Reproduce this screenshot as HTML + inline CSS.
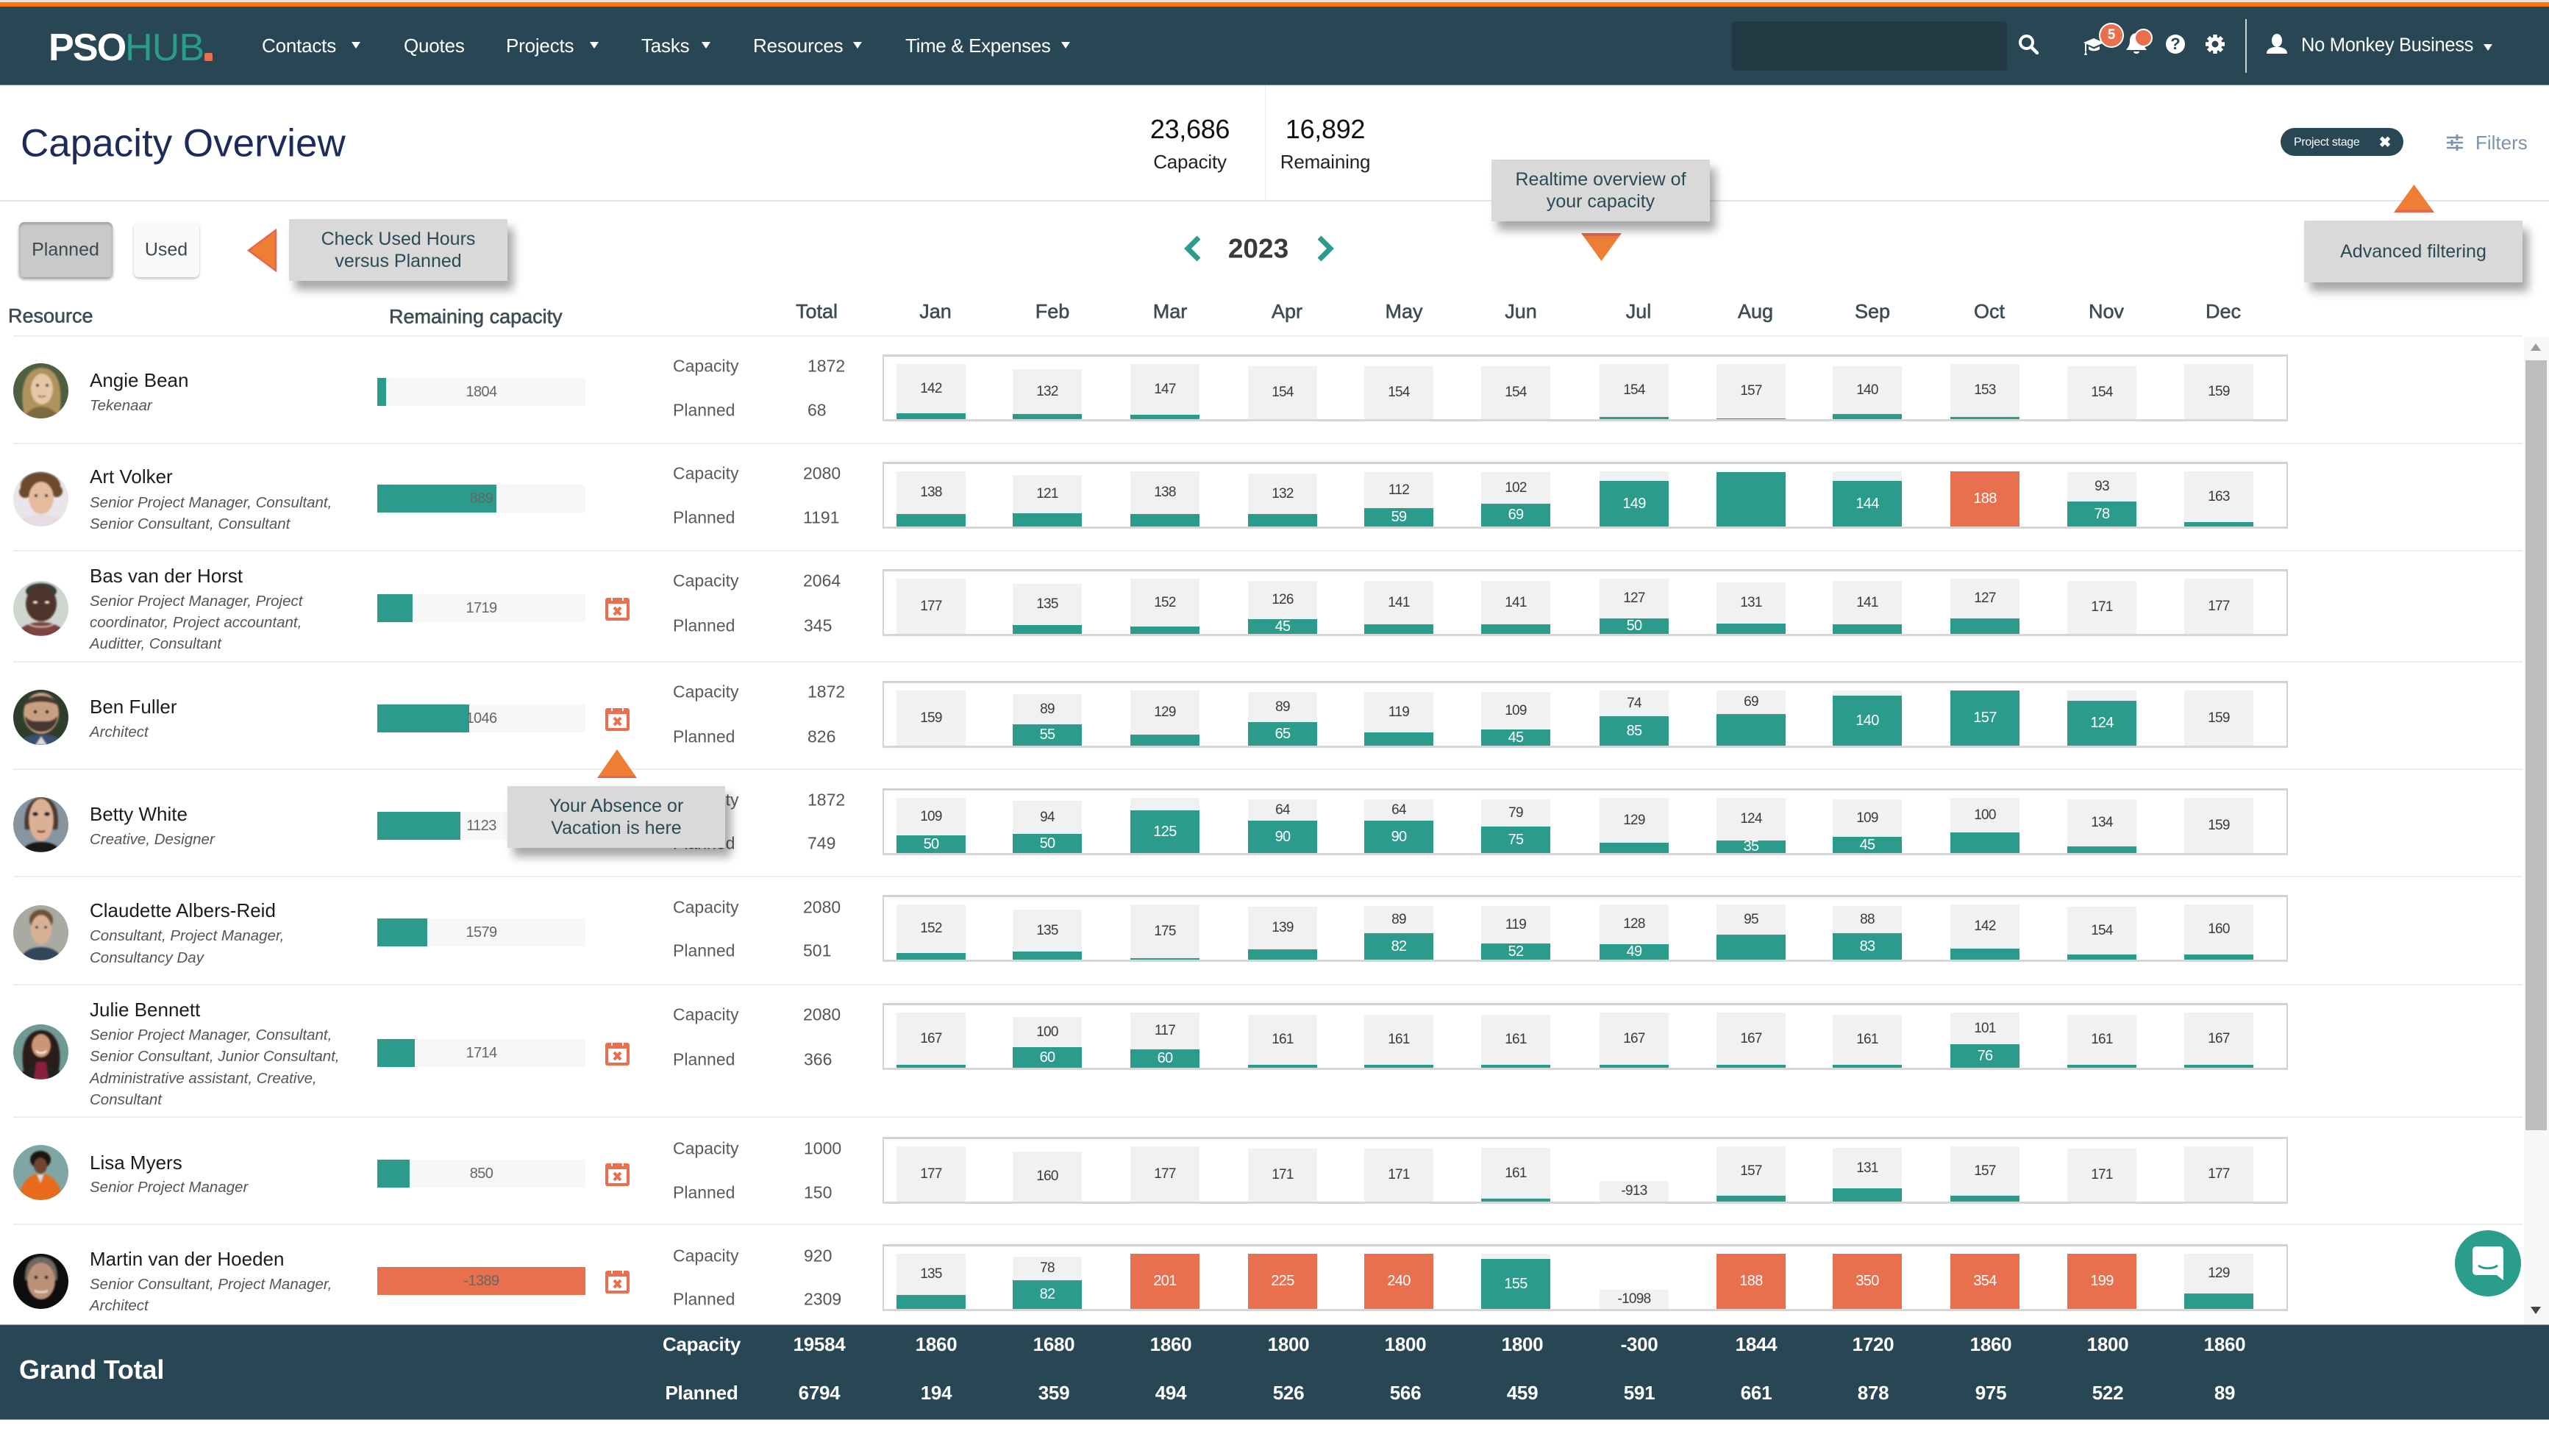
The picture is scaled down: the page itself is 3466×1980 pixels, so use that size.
<!DOCTYPE html>
<html lang="en"><head><meta charset="utf-8"><title>Capacity Overview</title>
<style>
html,body{margin:0;padding:0;background:#fff}
body{width:3466px;height:1980px;overflow:hidden;position:relative;font-family:"Liberation Sans",sans-serif;color:#3c3c3c}
.a{position:absolute}
.t,.m{position:absolute;white-space:nowrap;line-height:1;transform:translateY(-50%)}
.m{transform:translate(-50%,-50%)}
.nav{color:#fff;font-size:26px;letter-spacing:-.2px;top:62px}
.car{position:absolute;width:0;height:0;border-left:6px solid transparent;border-right:6px solid transparent;border-top:9px solid #fff;top:57px}
.tip{position:absolute;background:#d9d9d9;box-shadow:8px 12px 12px rgba(0,0,0,.35);z-index:5;color:#2a4a56;font-size:25px;text-align:center;line-height:30px;display:flex;align-items:center;justify-content:center}
.hd{font-size:27px;color:#3d4d53;-webkit-text-stroke:.6px #3d4d53}
.line{position:absolute;left:18px;width:3412px;height:2px;background:#ececec}
.n{font-size:26px;color:#1c1c1c;left:122px}
.ro{font-size:20.5px;font-style:italic;color:#555;left:122px}
.l{font-size:23px;color:#5a5a5a;left:915px}
.v{font-size:23px;color:#555}
.bar{position:absolute;left:513px;width:283px;height:38px;background:#f7f7f7;font-size:20px;color:#666;overflow:hidden}
.bar b{display:block;height:100%;background:#2b9c8b}
.bar span{position:absolute;left:0;right:0;top:0;line-height:38px;text-align:center;letter-spacing:-.6px}
.bar b.o{background:#e8704f}
.cal{position:absolute;left:823px;width:33px;height:34px}
.av{position:absolute;left:18px;width:75px;height:75px;border-radius:50%;overflow:hidden;display:block}
.av g{filter:blur(1px)}
.r{position:absolute;left:1200px;width:1911px;height:91px}
.r::before{content:"";position:absolute;inset:0;border:2px solid #d2d2d2;border-top-width:3px;border-bottom-width:3px;box-sizing:border-box;border-bottom-color:#d6d6d6}
.r p{position:absolute;bottom:3px;margin:0;width:94px;background:#f1f1f1;display:flex;flex-direction:column;font-size:19px;letter-spacing:-.7px;color:#3a3a3a}
.r p i{flex:1;font-style:normal;display:flex;align-items:center;justify-content:center;min-height:0}
.r p b{display:flex;align-items:center;justify-content:center;background:#2b9c8b;color:#fff;font-weight:normal;font-size:20px;flex:none}
.r p b.o{background:#e8704f}
.r p:nth-child(1){left:19px}.r p:nth-child(2){left:177px}.r p:nth-child(3){left:337px}.r p:nth-child(4){left:497px}
.r p:nth-child(5){left:655px}.r p:nth-child(6){left:814px}.r p:nth-child(7){left:975px}.r p:nth-child(8){left:1134px}
.r p:nth-child(9){left:1292px}.r p:nth-child(10){left:1452px}.r p:nth-child(11){left:1611px}.r p:nth-child(12){left:1770px}
.gt{color:#fff;font-weight:bold;font-size:26px;letter-spacing:-.3px}
</style></head><body>

<!-- top -->
<div class="a" style="left:0;top:0;width:3466px;height:3px;background:#e6e2dd"></div>
<div class="a" style="left:0;top:3px;width:3466px;height:6px;background:#ff7200"></div>
<div class="a" style="left:0;top:9px;width:3466px;height:106px;background:#284653;border-bottom:1px solid #6d8590"></div>
<div class="t" style="left:66px;top:65px;font-size:52px;font-weight:bold;color:#fff;letter-spacing:-1.8px">PSO</div>
<div class="t" style="left:170px;top:65px;font-size:52px;color:#2b9c8b;letter-spacing:-.8px">HUB</div>
<div class="a" style="left:278px;top:72px;width:11px;height:11px;background:#e8704f;border-radius:2px"></div>
<div class="t nav" style="left:356px">Contacts</div><div class="car" style="left:478px"></div>
<div class="t nav" style="left:549px">Quotes</div>
<div class="t nav" style="left:688px">Projects</div><div class="car" style="left:802px"></div>
<div class="t nav" style="left:872px">Tasks</div><div class="car" style="left:954px"></div>
<div class="t nav" style="left:1024px">Resources</div><div class="car" style="left:1160px"></div>
<div class="t nav" style="left:1231px;letter-spacing:-.35px">Time &amp; Expenses</div><div class="car" style="left:1443px"></div>

<div class="a" style="left:2355px;top:29px;width:374px;height:67px;background:#223843;border-radius:5px"></div>
<svg class="a" style="left:2744px;top:46px" width="28" height="28" viewBox="0 0 28 28"><circle cx="11.500" cy="11.500" r="8.500" fill="none" stroke="#fff" stroke-width="4"/><path d="M18 18l8 8" stroke="#fff" stroke-width="4.500" stroke-linecap="round"/></svg>
<svg class="a" style="left:2833px;top:50px" width="30" height="26" viewBox="0 0 30 26"><path d="M14 2L28 8 14 14 0 8z" fill="#fff"/><path d="M7 13v4c3 3 11 3 15 0v-4l-8 3.500z" fill="#fff"/><path d="M3 9v11" stroke="#fff" stroke-width="2"/><path d="M1 25l2-6 2 6z" fill="#fff"/></svg>
<div class="a" style="left:2854px;top:31px;width:30px;height:30px;border:2px solid #fff;border-radius:50%;background:#e8704f;color:#fff;font-size:19px;font-weight:bold;line-height:30px;text-align:center">5</div>
<svg class="a" style="left:2890px;top:42px" width="30" height="34" viewBox="0 0 30 34"><path d="M15 3c-6 0-9 5-9 11 0 6-3 9-5 12h28c-2-3-5-6-5-12 0-6-3-11-9-11z" fill="#fff"/><path d="M11 28c1 4 7 4 8 0z" fill="#fff"/></svg>
<div class="a" style="left:2902px;top:39px;width:21px;height:21px;border:2px solid #fff;border-radius:50%;background:#e8704f"></div>
<div class="a" style="left:2945px;top:47px;width:26px;height:26px;border-radius:50%;background:#fff;color:#284653;font-size:22px;font-weight:bold;line-height:26px;text-align:center">?</div>
<svg class="a" style="left:2998px;top:46px" width="28" height="28" viewBox="0 0 28 28"><g stroke="#fff" stroke-width="5.500"><path d="M14 1v26M1 14h26M4.800 4.800l18.400 18.400M23.200 4.800L4.800 23.200"/></g><circle cx="14" cy="14" r="9.500" fill="#fff"/><circle cx="14" cy="14" r="4.500" fill="#284653"/></svg>
<div class="a" style="left:3053px;top:26px;width:2px;height:73px;background:#c9d3d8"></div>
<svg class="a" style="left:3082px;top:46px" width="28" height="28" viewBox="0 0 28 28"><ellipse cx="14" cy="9" rx="7" ry="9" fill="#fff"/><path d="M0 27c0-6 5-8 10-9h8c5 1 10 3 10 9z" fill="#fff"/></svg>
<div class="t nav" style="left:3129px;letter-spacing:-.3px;font-size:25.500px">No Monkey Business</div><div class="car" style="left:3377px;top:60px"></div>

<!-- page header -->
<div class="a" style="left:0;top:272px;width:3466px;height:2px;background:#dde5ee"></div>
<div class="a" style="left:1720px;top:116px;width:1px;height:156px;background:#eee"></div>
<div class="t" style="left:28px;top:195px;font-size:53px;color:#1d2b5a">Capacity Overview</div>
<div class="m" style="left:1618px;top:176px;font-size:36px;color:#111;letter-spacing:-.3px">23,686</div>
<div class="m" style="left:1618px;top:220px;font-size:26px;color:#222;letter-spacing:-.2px">Capacity</div>
<div class="m" style="left:1802px;top:176px;font-size:36px;color:#111;letter-spacing:-.3px">16,892</div>
<div class="m" style="left:1802px;top:220px;font-size:26px;color:#222;letter-spacing:-.2px">Remaining</div>
<div class="a" style="left:3101px;top:174px;width:167px;height:38px;background:#284653;border-radius:19px"></div>
<div class="t" style="left:3119px;top:194px;font-size:16px;letter-spacing:-.3px;color:#fff">Project stage</div>
<div class="m" style="left:3243px;top:194px;font-size:20px;font-weight:bold;color:#fff">✖</div>
<svg class="a" style="left:3326px;top:182px" width="24" height="24" viewBox="0 0 24 24"><path d="M1 5h22M1 12h22M1 19h22" stroke="#7b94ad" stroke-width="2.500"/><path d="M15 1v8M8 8v8M15 15v8" stroke="#7b94ad" stroke-width="3"/></svg>
<div class="t" style="left:3366px;top:194px;font-size:26px;color:#7b94ad">Filters</div>

<!-- toggle -->
<div class="a" style="left:26px;top:302px;width:127px;height:75px;background:#c9c9c9;border-radius:7px;box-shadow:0 3px 4px rgba(0,0,0,.4),inset 0 3px 3px rgba(0,0,0,.2)"></div>
<div class="m" style="left:89px;top:340px;font-size:25px;color:#3a4a50">Planned</div>
<div class="a" style="left:182px;top:302px;width:89px;height:75px;background:#fafafa;border-radius:7px;box-shadow:0 2px 3px rgba(0,0,0,.25)"></div>
<div class="m" style="left:226px;top:340px;font-size:25px;color:#3a4a50">Used</div>
<svg class="a" style="left:335px;top:311px" width="42" height="59" viewBox="0 0 42 59"><path d="M40 2v55L3 29.500z" fill="#ee7e33" stroke="#e2694f" stroke-width="2.500"/></svg>
<div class="tip" style="left:393px;top:298px;width:297px;height:84px">Check Used Hours<br>versus Planned</div>

<!-- year -->
<svg class="a" style="left:1609px;top:320px" width="26" height="36" viewBox="0 0 26 36"><path d="M21 3L6 18l15 15" fill="none" stroke="#2b9c8b" stroke-width="7"/></svg>
<div class="m" style="left:1711px;top:338px;font-size:37px;font-weight:bold;color:#3a3a3a">2023</div>
<svg class="a" style="left:1789px;top:320px" width="26" height="36" viewBox="0 0 26 36"><path d="M5 3l15 15L5 33" fill="none" stroke="#2b9c8b" stroke-width="7"/></svg>

<div class="tip" style="left:2028px;top:217px;width:297px;height:84px">Realtime overview of<br>your capacity</div>
<svg class="a" style="left:2148px;top:316px" width="60" height="41" viewBox="0 0 60 41"><path d="M2 1h55L29.500 39z" fill="#ee7e33"/><path d="M2 1h55l-3 4H5z" fill="#e2694f"/></svg>
<svg class="a" style="left:3253px;top:250px" width="60" height="41" viewBox="0 0 60 41"><path d="M2 39h55L29.500 1z" fill="#ee7e33"/><path d="M2 39h55l-3-4H5z" fill="#e2694f"/></svg>
<div class="tip" style="left:3133px;top:300px;width:297px;height:84px">Advanced filtering</div>

<!-- column headers -->
<div class="t hd" style="left:11px;top:430px">Resource</div>
<div class="t hd" style="left:529px;top:431px">Remaining capacity</div>
<div class="t hd" style="left:1082px;top:424px">Total</div>
<div class="m hd" style="left:1272px;top:424px">Jan</div><div class="m hd" style="left:1431px;top:424px">Feb</div><div class="m hd" style="left:1591px;top:424px">Mar</div><div class="m hd" style="left:1750px;top:424px">Apr</div><div class="m hd" style="left:1909px;top:424px">May</div><div class="m hd" style="left:2068px;top:424px">Jun</div><div class="m hd" style="left:2228px;top:424px">Jul</div><div class="m hd" style="left:2387px;top:424px">Aug</div><div class="m hd" style="left:2546px;top:424px">Sep</div><div class="m hd" style="left:2705px;top:424px">Oct</div><div class="m hd" style="left:2864px;top:424px">Nov</div><div class="m hd" style="left:3023px;top:424px">Dec</div>

<!-- dividers -->
<div class="line" style="top:456px;left:18px;width:3412px;background:#eee"></div>
<div class="line" style="top:602px"></div><div class="line" style="top:748px"></div><div class="line" style="top:899px"></div><div class="line" style="top:1045px"></div><div class="line" style="top:1191px"></div><div class="line" style="top:1338px"></div><div class="line" style="top:1518px"></div><div class="line" style="top:1664px"></div>

<!-- avatars -->
<svg class="av" style="top:494px" viewBox="0 0 75 75"><rect width="75" height="75" fill="#4f5f42"/><g><path d="M16 75C8 42 12 8 38 6c26 0 30 32 24 69z" fill="#b0925c"/><ellipse cx="39" cy="35" rx="15" ry="21" fill="#e6c7a8"/><path d="M14 75c6-12 16-16 24-16s20 5 26 16z" fill="#7d6b40"/><circle cx="33" cy="30" r="1.800" fill="#443"/><circle cx="46" cy="30" r="1.800" fill="#443"/><path d="M34 44c3 2 7 2 10 0" stroke="#a05f50" stroke-width="1.600" fill="none"/></g></svg>
<svg class="av" style="top:641px" viewBox="0 0 75 75"><rect width="75" height="75" fill="#e8e6ea"/><g><ellipse cx="37" cy="20" rx="27" ry="19" fill="#6b4a2e"/><circle cx="16" cy="28" r="8" fill="#6b4a2e"/><circle cx="59" cy="27" r="8" fill="#6b4a2e"/><ellipse cx="38" cy="36" rx="17" ry="22" fill="#e5bb9f"/><path d="M4 75c4-13 20-16 34-16s30 3 34 16z" fill="#e6dde4"/><circle cx="31" cy="33" r="1.800" fill="#333"/><circle cx="45" cy="33" r="1.800" fill="#333"/></g></svg>
<svg class="av" style="top:790px" viewBox="0 0 75 75"><rect width="75" height="75" fill="#cfd6d0"/><g><ellipse cx="38" cy="14" rx="21" ry="11" fill="#3a3f34"/><ellipse cx="38" cy="31" rx="21" ry="24" fill="#4d352b"/><path d="M4 75c4-14 20-19 34-19s30 5 34 19z" fill="#7c4343"/><path d="M20 58c8 6 28 6 36 0" stroke="#d8c8b8" stroke-width="2" fill="none"/><ellipse cx="30" cy="29" rx="3.500" ry="2" fill="#e6e0da"/><ellipse cx="46" cy="29" rx="3.500" ry="2" fill="#e6e0da"/></g></svg>
<svg class="av" style="top:938px" viewBox="0 0 75 75"><rect width="75" height="75" fill="#2f3d2d"/><g><ellipse cx="38" cy="32" rx="24" ry="28" fill="#caa083"/><path d="M16 36c2 28 42 28 44 0-7 8-12 7-22 7s-15 1-22-7z" fill="#453730"/><path d="M14 22C18 4 58 4 62 22c-10-8-38-8-48 0z" fill="#4a3a30"/><circle cx="30" cy="30" r="2" fill="#222"/><circle cx="46" cy="30" r="2" fill="#222"/><path d="M8 75c3-9 10-14 30-14s27 5 30 14z" fill="#3b4f70"/><path d="M30 75l8-12 8 12z" fill="#d9d9d9"/></g></svg>
<svg class="av" style="top:1084px" viewBox="0 0 75 75"><rect width="75" height="75" fill="#8795a1"/><g><path d="M16 44C12 8 30 0 39 0s26 8 21 44z" fill="#4a3a30"/><ellipse cx="38" cy="31" rx="17" ry="29" fill="#dbb195"/><ellipse cx="30" cy="23" rx="3.500" ry="2.400" fill="#222"/><ellipse cx="46" cy="23" rx="3.500" ry="2.400" fill="#222"/><path d="M33 46c3 1.500 7 1.500 10 0" stroke="#8a3a3a" stroke-width="2.400" fill="none"/><path d="M12 75c2-10 14-14 26-14s24 4 26 14z" fill="#191919"/></g></svg>
<svg class="av" style="top:1231px" viewBox="0 0 75 75"><rect width="75" height="75" fill="#a9aaa2"/><g><ellipse cx="38" cy="20" rx="16" ry="14" fill="#6a5238"/><ellipse cx="38" cy="33" rx="14" ry="20" fill="#d8b096"/><path d="M10 75c3-14 16-18 28-18s25 4 28 18z" fill="#34465a"/><circle cx="32" cy="30" r="1.600" fill="#333"/><circle cx="44" cy="30" r="1.600" fill="#333"/></g></svg>
<svg class="av" style="top:1393px" viewBox="0 0 75 75"><rect width="75" height="75" fill="#6f9a94"/><g><path d="M14 62C8 24 22 8 38 8s30 16 24 54z" fill="#2a1c18"/><ellipse cx="38" cy="29" rx="13" ry="16" fill="#cb9675"/><path d="M8 75c3-15 15-21 30-21s27 6 30 21z" fill="#222"/><path d="M28 75l3-24h14l3 24z" fill="#8a2040"/><path d="M31 36c4 4 10 4 14 0" stroke="#fff" stroke-width="2" fill="none"/></g></svg>
<svg class="av" style="top:1557px" viewBox="0 0 75 75"><rect width="75" height="75" fill="#7fa6a4"/><g><ellipse cx="37" cy="20" rx="14" ry="12" fill="#1c1512"/><ellipse cx="37" cy="28" rx="9" ry="11" fill="#6e452f"/><path d="M8 75c1-22 13-36 29-36s28 14 30 36z" fill="#e86a1c"/><path d="M32 40l5 12 5-12z" fill="#c7e2e6"/></g></svg>
<svg class="av" style="top:1705px" viewBox="0 0 75 75"><rect width="75" height="75" fill="#0e0e0e"/><g><path d="M16 36C14 8 30 4 38 4s24 4 22 32z" fill="#6e6660"/><ellipse cx="38" cy="37" rx="19" ry="25" fill="#bb917a"/><circle cx="31" cy="32" r="2" fill="#222"/><circle cx="45" cy="32" r="2" fill="#222"/><path d="M29 50c5 3 13 3 18 0" stroke="#f0e0d4" stroke-width="2.400" fill="none"/></g></svg>

<!-- names -->
<div class="t n" style="top:517px">Angie Bean</div><div class="t ro" style="top:552px">Tekenaar</div>
<div class="t n" style="top:648px">Art Volker</div><div class="t ro" style="top:684px">Senior Project Manager, Consultant,</div><div class="t ro" style="top:713px">Senior Consultant, Consultant</div>
<div class="t n" style="top:783px">Bas van der Horst</div><div class="t ro" style="top:818px">Senior Project Manager, Project</div><div class="t ro" style="top:847px">coordinator, Project accountant,</div><div class="t ro" style="top:876px">Auditter, Consultant</div>
<div class="t n" style="top:961px">Ben Fuller</div><div class="t ro" style="top:996px">Architect</div>
<div class="t n" style="top:1107px">Betty White</div><div class="t ro" style="top:1142px">Creative, Designer</div>
<div class="t n" style="top:1238px">Claudette Albers-Reid</div><div class="t ro" style="top:1273px">Consultant, Project Manager,</div><div class="t ro" style="top:1303px">Consultancy Day</div>
<div class="t n" style="top:1373px">Julie Bennett</div><div class="t ro" style="top:1408px">Senior Project Manager, Consultant,</div><div class="t ro" style="top:1437px">Senior Consultant, Junior Consultant,</div><div class="t ro" style="top:1467px">Administrative assistant, Creative,</div><div class="t ro" style="top:1496px">Consultant</div>
<div class="t n" style="top:1581px">Lisa Myers</div><div class="t ro" style="top:1615px">Senior Project Manager</div>
<div class="t n" style="top:1712px">Martin van der Hoeden</div><div class="t ro" style="top:1747px">Senior Consultant, Project Manager,</div><div class="t ro" style="top:1776px">Architect</div>

<!-- remaining bars -->
<div class="bar" style="top:514px"><b style="width:12px"></b><span>1804</span></div>
<div class="bar" style="top:659px"><b style="width:162px"></b><span>889</span></div>
<div class="bar" style="top:808px"><b style="width:48px"></b><span>1719</span></div>
<div class="bar" style="top:958px"><b style="width:125px"></b><span>1046</span></div>
<div class="bar" style="top:1104px"><b style="width:113px"></b><span>1123</span></div>
<div class="bar" style="top:1249px"><b style="width:68px"></b><span>1579</span></div>
<div class="bar" style="top:1413px"><b style="width:51px"></b><span>1714</span></div>
<div class="bar" style="top:1577px"><b style="width:44px"></b><span>850</span></div>
<div class="bar" style="top:1723px"><b class="o" style="width:283px"></b><span>-1389</span></div>

<!-- calendars -->
<svg class="cal" style="top:810px" viewBox="0 0 33 34"><rect y="3" width="33" height="31" rx="3" fill="#e8704f"/><rect x="4" y="11" width="25" height="19" fill="#fff"/><path d="M9 1v6M24 1v6" stroke="#fff" stroke-width="2"/><path d="M12 16l9 10M21 16l-9 10" stroke="#e8704f" stroke-width="4"/></svg>
<svg class="cal" style="top:960px" viewBox="0 0 33 34"><rect y="3" width="33" height="31" rx="3" fill="#e8704f"/><rect x="4" y="11" width="25" height="19" fill="#fff"/><path d="M9 1v6M24 1v6" stroke="#fff" stroke-width="2"/><path d="M12 16l9 10M21 16l-9 10" stroke="#e8704f" stroke-width="4"/></svg>
<svg class="cal" style="top:1415px" viewBox="0 0 33 34"><rect y="3" width="33" height="31" rx="3" fill="#e8704f"/><rect x="4" y="11" width="25" height="19" fill="#fff"/><path d="M9 1v6M24 1v6" stroke="#fff" stroke-width="2"/><path d="M12 16l9 10M21 16l-9 10" stroke="#e8704f" stroke-width="4"/></svg>
<svg class="cal" style="top:1579px" viewBox="0 0 33 34"><rect y="3" width="33" height="31" rx="3" fill="#e8704f"/><rect x="4" y="11" width="25" height="19" fill="#fff"/><path d="M9 1v6M24 1v6" stroke="#fff" stroke-width="2"/><path d="M12 16l9 10M21 16l-9 10" stroke="#e8704f" stroke-width="4"/></svg>
<svg class="cal" style="top:1725px" viewBox="0 0 33 34"><rect y="3" width="33" height="31" rx="3" fill="#e8704f"/><rect x="4" y="11" width="25" height="19" fill="#fff"/><path d="M9 1v6M24 1v6" stroke="#fff" stroke-width="2"/><path d="M12 16l9 10M21 16l-9 10" stroke="#e8704f" stroke-width="4"/></svg>

<!-- capacity / planned -->
<div class="t l" style="top:498px">Capacity</div><div class="t v" style="left:1098px;top:498px">1872</div><div class="t l" style="top:558px">Planned</div><div class="t v" style="left:1098px;top:558px">68</div>
<div class="t l" style="top:644px">Capacity</div><div class="t v" style="left:1092px;top:644px">2080</div><div class="t l" style="top:704px">Planned</div><div class="t v" style="left:1092px;top:704px">1191</div>
<div class="t l" style="top:790px">Capacity</div><div class="t v" style="left:1092px;top:790px">2064</div><div class="t l" style="top:851px">Planned</div><div class="t v" style="left:1093px;top:851px">345</div>
<div class="t l" style="top:941px">Capacity</div><div class="t v" style="left:1098px;top:941px">1872</div><div class="t l" style="top:1002px">Planned</div><div class="t v" style="left:1098px;top:1002px">826</div>
<div class="t l" style="top:1088px">Capacity</div><div class="t v" style="left:1098px;top:1088px">1872</div><div class="t l" style="top:1147px">Planned</div><div class="t v" style="left:1098px;top:1147px">749</div>
<div class="t l" style="top:1234px">Capacity</div><div class="t v" style="left:1092px;top:1234px">2080</div><div class="t l" style="top:1293px">Planned</div><div class="t v" style="left:1092px;top:1293px">501</div>
<div class="t l" style="top:1380px">Capacity</div><div class="t v" style="left:1092px;top:1380px">2080</div><div class="t l" style="top:1441px">Planned</div><div class="t v" style="left:1093px;top:1441px">366</div>
<div class="t l" style="top:1562px">Capacity</div><div class="t v" style="left:1093px;top:1562px">1000</div><div class="t l" style="top:1622px">Planned</div><div class="t v" style="left:1093px;top:1622px">150</div>
<div class="t l" style="top:1708px">Capacity</div><div class="t v" style="left:1093px;top:1708px">920</div><div class="t l" style="top:1767px">Planned</div><div class="t v" style="left:1093px;top:1767px">2309</div>

<!-- absence tooltip -->
<svg class="a" style="left:810px;top:1018px;z-index:4" width="58" height="41" viewBox="0 0 58 41"><path d="M2 40h54L29 1z" fill="#ee7e33"/><path d="M2 40h54l-3-3H5z" fill="#e2694f"/></svg>
<div class="tip" style="left:690px;top:1069px;width:296px;height:84px">Your Absence or<br>Vacation is here</div>

<!-- charts -->
<div class="r" style="top:482px"><p style="height:75px"><i>142</i><b style="height:8px"></b></p><p style="height:68px"><i>132</i><b style="height:7px"></b></p><p style="height:75px"><i>147</i><b style="height:6px"></b></p><p style="height:72px"><i>154</i></p><p style="height:72px"><i>154</i></p><p style="height:72px"><i>154</i></p><p style="height:75px"><i>154</i><b style="height:3px"></b></p><p style="height:75px"><i>157</i><b style="height:1px"></b></p><p style="height:72px"><i>140</i><b style="height:7px"></b></p><p style="height:75px"><i>153</i><b style="height:3px"></b></p><p style="height:72px"><i>154</i></p><p style="height:75px"><i>159</i></p></div>
<div class="r" style="top:628px"><p style="height:75px"><i>138</i><b style="height:17px"></b></p><p style="height:70px"><i>121</i><b style="height:18px"></b></p><p style="height:75px"><i>138</i><b style="height:17px"></b></p><p style="height:72px"><i>132</i><b style="height:17px"></b></p><p style="height:74px"><i>112</i><b style="height:25px">59</b></p><p style="height:74px"><i>102</i><b style="height:31px">69</b></p><p style="height:75px"><i></i><b style="height:62px">149</b></p><p style="height:74px"><i></i><b style="height:74px"></b></p><p style="height:75px"><i></i><b style="height:62px">144</b></p><p style="height:75px"><i></i><b class="o" style="height:75px">188</b></p><p style="height:74px"><i>93</i><b style="height:34px">78</b></p><p style="height:75px"><i>163</i><b style="height:6px"></b></p></div>
<div class="r" style="top:774px"><p style="height:75px"><i>177</i></p><p style="height:68px"><i>135</i><b style="height:12px"></b></p><p style="height:75px"><i>152</i><b style="height:10px"></b></p><p style="height:72px"><i>126</i><b style="height:20px">45</b></p><p style="height:72px"><i>141</i><b style="height:13px"></b></p><p style="height:72px"><i>141</i><b style="height:13px"></b></p><p style="height:75px"><i>127</i><b style="height:21px">50</b></p><p style="height:70px"><i>131</i><b style="height:14px"></b></p><p style="height:72px"><i>141</i><b style="height:13px"></b></p><p style="height:75px"><i>127</i><b style="height:21px"></b></p><p style="height:72px"><i>171</i></p><p style="height:75px"><i>177</i></p></div>
<div class="r" style="top:926px"><p style="height:75px"><i>159</i></p><p style="height:70px"><i>89</i><b style="height:29px">55</b></p><p style="height:75px"><i>129</i><b style="height:15px"></b></p><p style="height:73px"><i>89</i><b style="height:32px">65</b></p><p style="height:73px"><i>119</i><b style="height:18px"></b></p><p style="height:73px"><i>109</i><b style="height:22px">45</b></p><p style="height:75px"><i>74</i><b style="height:40px">85</b></p><p style="height:75px"><i>69</i><b style="height:43px"></b></p><p style="height:75px"><i></i><b style="height:68px">140</b></p><p style="height:75px"><i></i><b style="height:75px">157</b></p><p style="height:75px"><i></i><b style="height:61px">124</b></p><p style="height:75px"><i>159</i></p></div>
<div class="r" style="top:1072px"><p style="height:75px"><i>109</i><b style="height:24px">50</b></p><p style="height:71px"><i>94</i><b style="height:26px">50</b></p><p style="height:75px"><i></i><b style="height:58px">125</b></p><p style="height:73px"><i>64</i><b style="height:44px">90</b></p><p style="height:73px"><i>64</i><b style="height:44px">90</b></p><p style="height:73px"><i>79</i><b style="height:36px">75</b></p><p style="height:75px"><i>129</i><b style="height:14px"></b></p><p style="height:75px"><i>124</i><b style="height:17px">35</b></p><p style="height:73px"><i>109</i><b style="height:22px">45</b></p><p style="height:75px"><i>100</i><b style="height:28px"></b></p><p style="height:73px"><i>134</i><b style="height:9px"></b></p><p style="height:75px"><i>159</i></p></div>
<div class="r" style="top:1217px"><p style="height:75px"><i>152</i><b style="height:9px"></b></p><p style="height:68px"><i>135</i><b style="height:11px"></b></p><p style="height:75px"><i>175</i><b style="height:2px"></b></p><p style="height:72px"><i>139</i><b style="height:14px"></b></p><p style="height:73px"><i>89</i><b style="height:36px">82</b></p><p style="height:73px"><i>119</i><b style="height:22px">52</b></p><p style="height:75px"><i>128</i><b style="height:21px">49</b></p><p style="height:75px"><i>95</i><b style="height:34px"></b></p><p style="height:73px"><i>88</i><b style="height:36px">83</b></p><p style="height:75px"><i>142</i><b style="height:15px"></b></p><p style="height:72px"><i>154</i><b style="height:7px"></b></p><p style="height:75px"><i>160</i><b style="height:7px"></b></p></div>
<div class="r" style="top:1364px"><p style="height:75px"><i>167</i><b style="height:4px"></b></p><p style="height:69px"><i>100</i><b style="height:28px">60</b></p><p style="height:75px"><i>117</i><b style="height:25px">60</b></p><p style="height:72px"><i>161</i><b style="height:4px"></b></p><p style="height:72px"><i>161</i><b style="height:4px"></b></p><p style="height:72px"><i>161</i><b style="height:4px"></b></p><p style="height:75px"><i>167</i><b style="height:4px"></b></p><p style="height:75px"><i>167</i><b style="height:4px"></b></p><p style="height:72px"><i>161</i><b style="height:4px"></b></p><p style="height:75px"><i>101</i><b style="height:32px">76</b></p><p style="height:72px"><i>161</i><b style="height:4px"></b></p><p style="height:75px"><i>167</i><b style="height:4px"></b></p></div>
<div class="r" style="top:1546px"><p style="height:75px"><i>177</i></p><p style="height:68px"><i>160</i></p><p style="height:75px"><i>177</i></p><p style="height:72px"><i>171</i></p><p style="height:72px"><i>171</i></p><p style="height:73px"><i>161</i><b style="height:4px"></b></p><p style="height:28px"><i>-913</i></p><p style="height:75px"><i>157</i><b style="height:8px"></b></p><p style="height:73px"><i>131</i><b style="height:18px"></b></p><p style="height:75px"><i>157</i><b style="height:8px"></b></p><p style="height:72px"><i>171</i></p><p style="height:75px"><i>177</i></p></div>
<div class="r" style="top:1692px"><p style="height:75px"><i>135</i><b style="height:19px"></b></p><p style="height:71px"><i>78</i><b style="height:39px">82</b></p><p style="height:75px"><i></i><b class="o" style="height:75px">201</b></p><p style="height:75px"><i></i><b class="o" style="height:75px">225</b></p><p style="height:75px"><i></i><b class="o" style="height:75px">240</b></p><p style="height:75px"><i></i><b style="height:68px">155</b></p><p style="height:26px"><i>-1098</i></p><p style="height:75px"><i></i><b class="o" style="height:75px">188</b></p><p style="height:75px"><i></i><b class="o" style="height:75px">350</b></p><p style="height:75px"><i></i><b class="o" style="height:75px">354</b></p><p style="height:75px"><i></i><b class="o" style="height:75px">199</b></p><p style="height:75px"><i>129</i><b style="height:21px"></b></p></div>

<!-- scrollbar -->
<div class="a" style="left:3432px;top:458px;width:34px;height:1343px;background:#f7f7f7"></div>
<div class="a" style="left:3434px;top:490px;width:29px;height:1047px;background:#bdbdbd"></div>
<div class="a" style="left:3441px;top:467px;width:0;height:0;border-left:7px solid transparent;border-right:7px solid transparent;border-bottom:10px solid #999"></div>
<div class="a" style="left:3441px;top:1777px;width:0;height:0;border-left:7px solid transparent;border-right:7px solid transparent;border-top:10px solid #444"></div>

<!-- chat -->
<div class="a" style="left:3338px;top:1673px;width:90px;height:90px;border-radius:50%;background:#2a9d8b"></div>
<svg class="a" style="left:3361px;top:1694px" width="44" height="48" viewBox="0 0 44 48"><path d="M6 1h32a5 5 0 0 1 5 5v41l-9-7H6a5 5 0 0 1-5-5V6a5 5 0 0 1 5-5z" fill="#fff"/><path d="M9 27c7 5 19 5 26 0" fill="none" stroke="#2a9d8b" stroke-width="3"/></svg>

<!-- grand total -->
<div class="a" style="left:0;top:1801px;width:3466px;height:130px;background:#284653;border-top:1px solid #8fa3ad;box-sizing:border-box;border-bottom:1px solid #8fa3ad"></div>
<div class="t" style="left:26px;top:1863px;font-size:36px;font-weight:bold;color:#fff;letter-spacing:-.2px">Grand Total</div>
<div class="m gt" style="left:954px;top:1828px">Capacity</div><div class="m gt" style="left:954px;top:1894px">Planned</div>
<div class="m gt" style="left:1114px;top:1828px">19584</div><div class="m gt" style="left:1114px;top:1894px">6794</div>
<div class="m gt" style="left:1273px;top:1828px">1860</div><div class="m gt" style="left:1433px;top:1828px">1680</div><div class="m gt" style="left:1592px;top:1828px">1860</div><div class="m gt" style="left:1752px;top:1828px">1800</div><div class="m gt" style="left:1911px;top:1828px">1800</div><div class="m gt" style="left:2070px;top:1828px">1800</div><div class="m gt" style="left:2229px;top:1828px">-300</div><div class="m gt" style="left:2388px;top:1828px">1844</div><div class="m gt" style="left:2547px;top:1828px">1720</div><div class="m gt" style="left:2707px;top:1828px">1860</div><div class="m gt" style="left:2866px;top:1828px">1800</div><div class="m gt" style="left:3025px;top:1828px">1860</div>
<div class="m gt" style="left:1273px;top:1894px">194</div><div class="m gt" style="left:1433px;top:1894px">359</div><div class="m gt" style="left:1592px;top:1894px">494</div><div class="m gt" style="left:1752px;top:1894px">526</div><div class="m gt" style="left:1911px;top:1894px">566</div><div class="m gt" style="left:2070px;top:1894px">459</div><div class="m gt" style="left:2229px;top:1894px">591</div><div class="m gt" style="left:2388px;top:1894px">661</div><div class="m gt" style="left:2547px;top:1894px">878</div><div class="m gt" style="left:2707px;top:1894px">975</div><div class="m gt" style="left:2866px;top:1894px">522</div><div class="m gt" style="left:3025px;top:1894px">89</div>

</body></html>
